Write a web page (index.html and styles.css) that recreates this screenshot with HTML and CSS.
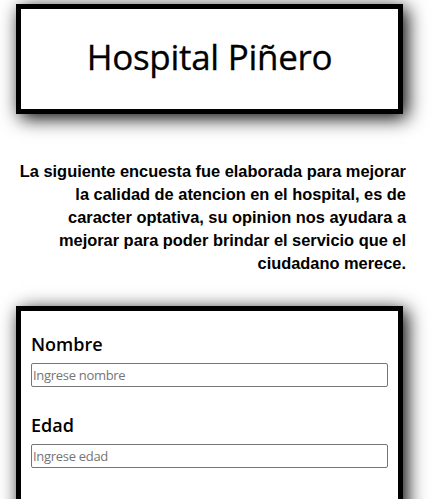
FILE: index.html
```html
<!DOCTYPE html>
<html lang="es">
<head>
<meta charset="utf-8">
<title>Hospital Piñero</title>
<link rel="stylesheet" href="styles.css">
</head>
<body>
<header class="header">
  <h1 class="title">Hospital Piñero</h1>
</header>
<p class="intro">La siguiente encuesta fue elaborada para mejorar la calidad de atencion en el hospital, es de caracter optativa, su opinion nos ayudara a mejorar para poder brindar el servicio que el ciudadano merece.</p>
<form class="survey">
  <div class="field">
    <label class="label" for="nombre">Nombre</label>
    <input class="input" id="nombre" type="text" placeholder="Ingrese nombre">
  </div>
  <div class="field">
    <label class="label" for="edad">Edad</label>
    <input class="input" id="edad" type="text" placeholder="Ingrese edad">
  </div>
</form>
</body>
</html>
```
FILE: styles.css
```css
html, body {
  margin: 0;
  background: #fff;
}
body {
  padding: 4px 29px 40px 16px;
  font-family: "Open Sans", "Noto Sans", sans-serif;
  color: #000;
}
.header {
  border: 5px solid #000;
  box-sizing: border-box;
  height: 110px;
  display: flex;
  align-items: center;
  justify-content: center;
  box-shadow: 4px 4px 18px #000;
  background: #fff;
}
.title {
  margin: 0 0 6px 0;
  font-size: 35px;
  font-weight: 400;
  letter-spacing: -0.3px;
  -webkit-text-stroke: 0.3px #000;
}
.intro {
  margin: 46px -3px 0 0;
  font-family: "Liberation Sans", Arial, sans-serif;
  font-weight: 700;
  font-size: 16.4px;
  line-height: 23px;
  text-align: right;
}
.survey {
  margin-top: 31px;
  border: 5px solid #000;
  padding: 20px 10px 60px;
  box-shadow: 4px 4px 18px #000;
  background: #fff;
}
.field {
  display: flex;
  flex-direction: column;
  margin-bottom: 25px;
}
.label {
  font-size: 18px;
  font-weight: 600;
  line-height: 27px;
  margin-bottom: 5px;
}
.input {
  height: 24px;
  box-sizing: border-box;
  border: 1px solid #767676;
  border-radius: 2px;
  padding: 0 1px;
  font-family: "Open Sans", "Noto Sans", sans-serif;
  font-size: 13px;
  letter-spacing: -0.3px;
  margin: 0;
}
.input::placeholder {
  color: #757575;
}
```
